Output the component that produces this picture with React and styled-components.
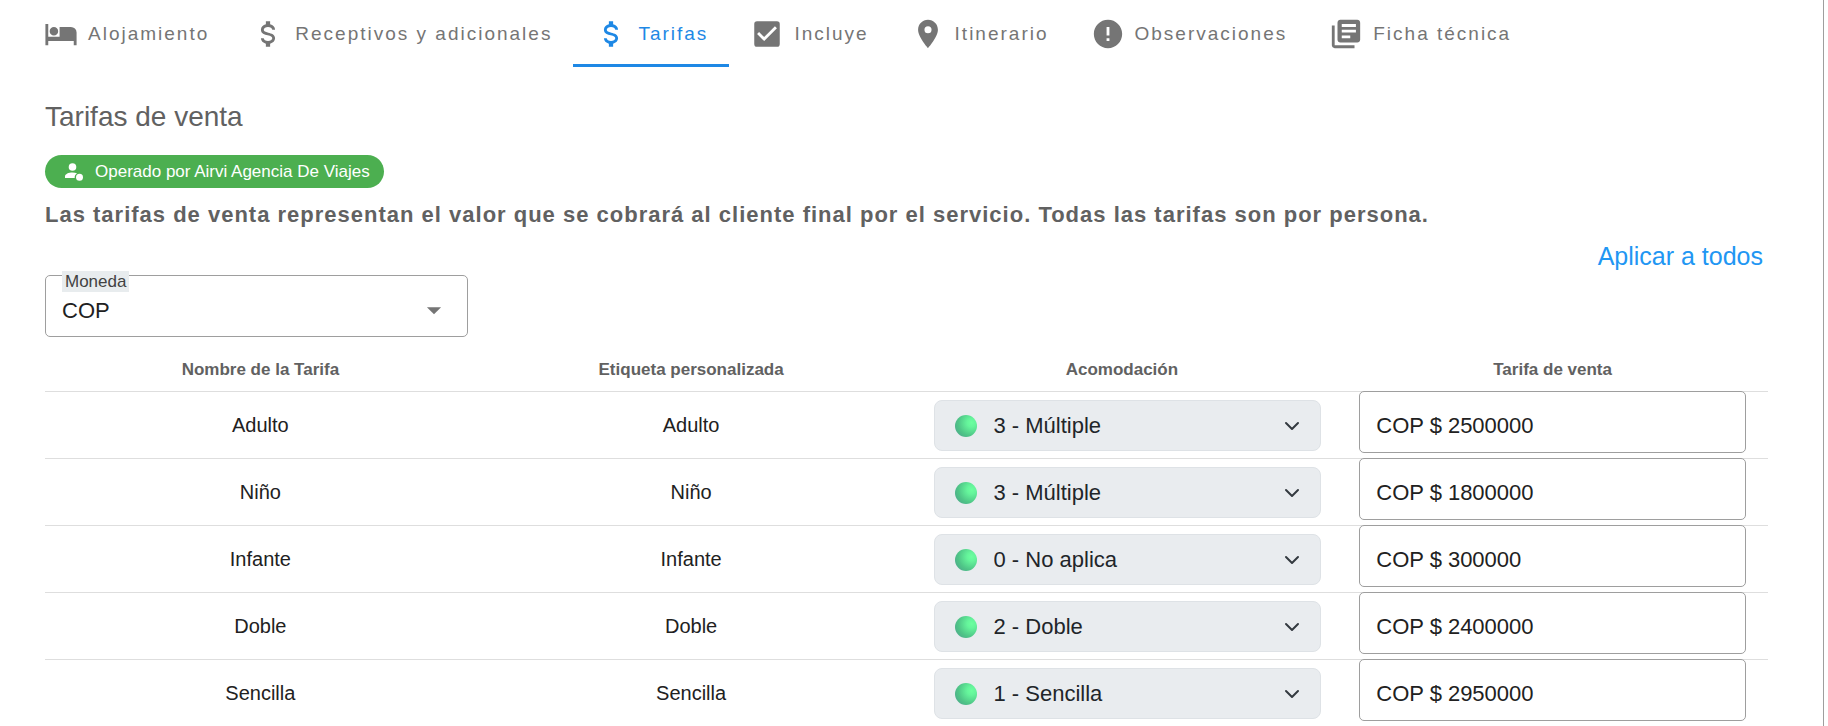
import React, { useState } from 'react';
import styled, { createGlobalStyle } from 'styled-components';
import {
  MdCheckBox,
  MdPlace,
  MdError,
  MdLibraryBooks,
  MdArrowDropDown,
} from 'react-icons/md';

const GlobalStyle = createGlobalStyle`
  * {
    box-sizing: border-box;
  }

  body {
    margin: 0;
    background: #fff;
    color: #212121;
    font-family: 'Liberation Sans', Arial, sans-serif;
  }

  button, input, select {
    font: inherit;
    color: inherit;
  }
`;

const Page = styled.div`
  min-height: 100vh;
  margin-right: 4px;
  border-right: 1px solid #9e9e9e;
`;

const TabBar = styled.nav`
  display: flex;
  height: 67px;
  padding-left: 23px;
`;

const Tab = styled.button`
  display: flex;
  align-items: center;
  gap: 10px;
  padding: 4px 21px 0;
  border: 0;
  border-bottom: 3px solid ${props => (props.$active ? '#1e88e5' : 'transparent')};
  background: none;
  color: ${props => (props.$active ? '#1e88e5' : '#757575')};
  font-size: 19px;
  line-height: 24px;
  letter-spacing: 2px;
  white-space: nowrap;
  cursor: pointer;

  svg {
    flex: none;
    width: 34px;
    height: 34px;
  }
`;

const Content = styled.main`
  padding: 32px 55px 0 45px;
`;

const Title = styled.h1`
  margin: 0;
  color: #616161;
  font-size: 28px;
  font-weight: 400;
  line-height: 36px;
`;

const Chip = styled.div`
  display: flex;
  align-items: center;
  gap: 11px;
  width: fit-content;
  height: 33px;
  margin-top: 20px;
  padding: 0 14px 0 20px;
  border-radius: 17px;
  background: #4caf50;
  color: #fff;
  font-size: 17px;
`;

const Notice = styled.p`
  margin: 11px 0 0;
  color: #616161;
  font-size: 22px;
  font-weight: 700;
  line-height: 32px;
  letter-spacing: 1px;
`;

const Actions = styled.div`
  display: flex;
  justify-content: flex-end;
  margin: 9px 0 3px;
  padding-right: 5px;
`;

const ApplyAll = styled.button`
  padding: 0;
  border: 0;
  background: none;
  color: #2196f3;
  font-size: 25px;
  line-height: 32px;
  cursor: pointer;
`;

const Field = styled.div`
  position: relative;
  display: flex;
  align-items: center;
  height: 62px;
  padding: 8px 16px 0;
  border: 1px solid #9e9e9e;
  border-radius: 5px;
  background: #fff;
  font-size: 22px;
`;

const CurrencyField = styled(Field)`
  width: 423px;

  svg {
    flex: none;
    width: 34px;
    height: 34px;
    color: #757575;
    pointer-events: none;
  }
`;

const FloatingLabel = styled.label`
  position: absolute;
  top: -5px;
  left: 16px;
  padding: 0 3px;
  background: #e8ecee;
  color: #424242;
  font-size: 17px;
  line-height: 21px;
`;

const PlainSelect = styled.select`
  flex: 1;
  min-width: 0;
  padding: 0;
  border: 0;
  outline: 0;
  background: none;
  appearance: none;
  cursor: pointer;
`;

const Prefix = styled.label`
  flex: none;
  padding-right: 6px;
`;

const PriceInput = styled.input`
  flex: 1;
  min-width: 0;
  padding: 0;
  border: 0;
  outline: 0;
  background: none;
`;

const RateTable = styled.table`
  width: 100%;
  margin-top: 6px;
  border-spacing: 0;
  table-layout: fixed;
`;

const HeadCell = styled.th`
  height: 48px;
  padding: 6px 22px 0;
  color: #616161;
  font-size: 17px;
`;

const Cell = styled.td`
  height: 67px;
  padding: ${props => props.$pad || '2px 22px 0'};
  box-shadow: inset 0 1px #dedede;
  font-size: 20px;
  text-align: center;
  vertical-align: ${props => (props.$top ? 'top' : 'middle')};
`;

const RoomSelect = styled.div`
  display: flex;
  align-items: center;
  gap: 17px;
  height: 51px;
  padding: 0 20px;
  border: 1px solid #dee2e6;
  border-radius: 8px;
  background: #e9ecef;
  color: #212529;
  font-size: 22px;

  svg {
    flex: none;
    pointer-events: none;
  }
`;

const Ball = styled.span`
  flex: none;
  width: 22px;
  height: 22px;
  border-radius: 50%;
  background: radial-gradient(circle at 75% 35%, #6cff9f 0%, #65f49b 20%, #4fc587 60%, #4b9c8c 100%);
`;

const BedIcon = () => (
  <svg viewBox="0 0 24 24" fill="currentColor" aria-hidden="true">
    <path d="M19 7h-8v7H3V5H1v15h2v-3h18v3h2v-9a4 4 0 0 0-4-4M7 13a3 3 0 0 0 3-3 3 3 0 0 0-3-3 3 3 0 0 0-3 3 3 3 0 0 0 3 3z" />
  </svg>
);

const DollarIcon = () => (
  <svg viewBox="0 0 24 24" fill="currentColor" aria-hidden="true">
    <path d="M7 15h2c0 1.080 1.370 2 3 2s3-.92 3-2c0-1.100-1.040-1.500-3.240-2.030C9.640 12.440 7 11.780 7 9c0-1.790 1.470-3.310 3.500-3.820V3h3v2.180C15.530 5.690 17 7.210 17 9h-2c0-1.080-1.370-2-3-2s-3 .92-3 2c0 1.100 1.040 1.500 3.240 2.030C14.360 11.560 17 12.220 17 15c0 1.790-1.470 3.310-3.500 3.820V21h-3v-2.180C8.470 18.310 7 16.790 7 15z" />
  </svg>
);

const OperatorIcon = () => (
  <svg width="19" height="18" viewBox="0 0 19 18" fill="currentColor" aria-hidden="true">
    <circle cx="7.500" cy="4" r="3.800" />
    <path d="M0 15v-1.500C0 11 3.500 9.500 7.500 9.500c1.700 0 3.200.2 4.500.8-1.700 1-2.500 2.700-2.300 4.700z" />
    <circle cx="14.500" cy="14.300" r="3.500" />
  </svg>
);

const Chevron = () => (
  <svg width="16" height="16" viewBox="0 0 16 16" fill="none" aria-hidden="true">
    <path d="M2 5l6 6 6-6" stroke="#343a40" strokeWidth="2" strokeLinecap="round" strokeLinejoin="round" />
  </svg>
);

const tabs = [
  { label: 'Alojamiento', Icon: BedIcon },
  { label: 'Receptivos y adicionales', Icon: DollarIcon },
  { label: 'Tarifas', Icon: DollarIcon },
  { label: 'Incluye', Icon: MdCheckBox },
  { label: 'Itinerario', Icon: MdPlace },
  { label: 'Observaciones', Icon: MdError },
  { label: 'Ficha técnica', Icon: MdLibraryBooks },
];

const rooms = ['0 - No aplica', '1 - Sencilla', '2 - Doble', '3 - Múltiple'];

const initialRates = [
  { name: 'Adulto', room: 3, price: '2500000' },
  { name: 'Niño', room: 3, price: '1800000' },
  { name: 'Infante', room: 0, price: '300000' },
  { name: 'Doble', room: 2, price: '2400000' },
  { name: 'Sencilla', room: 1, price: '2950000' },
];

const App = () => {
  const [activeTab, setActiveTab] = useState('Tarifas');
  const [currency, setCurrency] = useState('COP');
  const [rates, setRates] = useState(initialRates);

  const updateRate = (index, changes) => {
    setRates(rates.map((rate, i) => (i === index ? { ...rate, ...changes } : rate)));
  };

  return (
    <Page>
      <GlobalStyle />
      <TabBar>
        {tabs.map(({ label, Icon }) => (
          <Tab key={label} type="button" $active={label === activeTab} onClick={() => setActiveTab(label)}>
            <Icon />
            {label}
          </Tab>
        ))}
      </TabBar>
      <Content>
        <Title>Tarifas de venta</Title>
        <Chip>
          <OperatorIcon />
          Operado por Airvi Agencia De Viajes
        </Chip>
        <Notice>
          Las tarifas de venta representan el valor que se cobrará al cliente final por el servicio. Todas las tarifas son por persona.
        </Notice>
        <Actions>
          <ApplyAll type="button">Aplicar a todos</ApplyAll>
        </Actions>
        <CurrencyField>
          <FloatingLabel htmlFor="currency">Moneda</FloatingLabel>
          <PlainSelect id="currency" value={currency} onChange={e => setCurrency(e.target.value)}>
            <option>COP</option>
            <option>USD</option>
          </PlainSelect>
          <MdArrowDropDown />
        </CurrencyField>
        <RateTable>
          <thead>
            <tr>
              <HeadCell>Nombre de la Tarifa</HeadCell>
              <HeadCell>Etiqueta personalizada</HeadCell>
              <HeadCell>Acomodación</HeadCell>
              <HeadCell>Tarifa de venta</HeadCell>
            </tr>
          </thead>
          <tbody>
            {rates.map((rate, index) => (
              <tr key={rate.name}>
                <Cell>{rate.name}</Cell>
                <Cell>{rate.name}</Cell>
                <Cell $top $pad="9px 16px 0 27px">
                  <RoomSelect>
                    <Ball />
                    <PlainSelect
                      aria-label={`Acomodación ${rate.name}`}
                      value={rate.room}
                      onChange={e => updateRate(index, { room: Number(e.target.value) })}
                    >
                      {rooms.map((room, value) => (
                        <option key={room} value={value}>{room}</option>
                      ))}
                    </PlainSelect>
                    <Chevron />
                  </RoomSelect>
                </Cell>
                <Cell $top $pad="0 22px">
                  <Field>
                    <Prefix htmlFor={`price-${index}`}>{currency} $</Prefix>
                    <PriceInput
                      id={`price-${index}`}
                      value={rate.price}
                      onChange={e => updateRate(index, { price: e.target.value })}
                    />
                  </Field>
                </Cell>
              </tr>
            ))}
          </tbody>
        </RateTable>
      </Content>
    </Page>
  );
};

export default App;
